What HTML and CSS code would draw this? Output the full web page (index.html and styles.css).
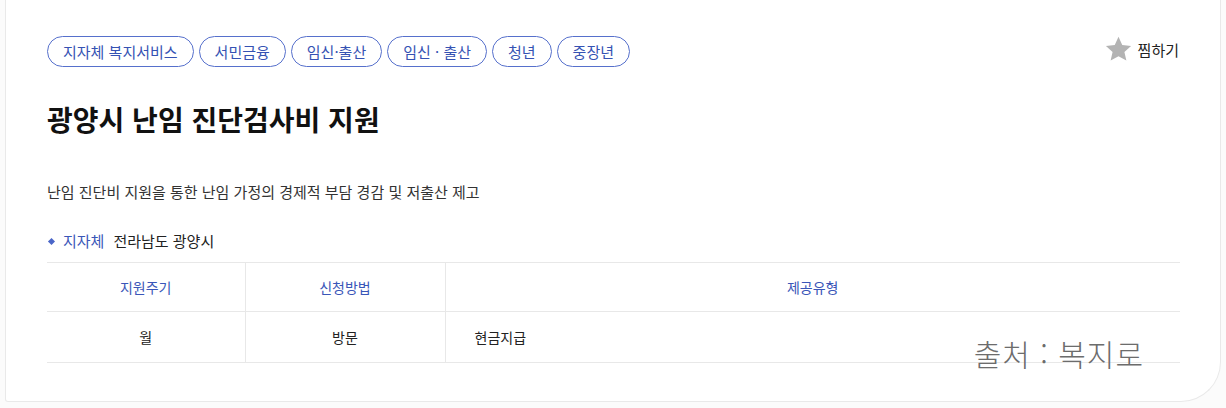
FILE: index.html
```html
<!DOCTYPE html>
<html lang="ko">
<head>
    <meta charset="UTF-8" />
    <title>광양시 난임 진단검사비 지원</title>
    <link rel="stylesheet" href="styles.css">
</head>
<body>
    <div class="card">
        <div class="top">
            <ul class="tags">
                <li>지자체 복지서비스</li>
                <li>서민금융</li>
                <li>임신·출산</li>
                <li>임신 · 출산</li>
                <li>청년</li>
                <li>중장년</li>
            </ul>
            <button class="bookmark">
                <svg width="29" height="29" viewBox="0 0 24 24">
                    <path d="M12 1.5l3.1 6.7 7.3.8-5.5 5 1.6 7.2L12 17.6l-6.5 3.6 1.6-7.2-5.5-5 7.3-.8z" fill="#b3b3b3"/>
                </svg>
                <span>찜하기</span>
            </button>
        </div>

        <h1 class="title">광양시 난임 진단검사비 지원</h1>

        <p class="desc">난임 진단비 지원을 통한 난임 가정의 경제적 부담 경감 및 저출산 제고</p>

        <div class="org">
            <span class="org-label">지자체</span>
            <span>전라남도 광양시</span>
        </div>

        <table class="info">
            <colgroup>
                <col class="c1">
                <col class="c2">
                <col>
            </colgroup>
            <tr>
                <th>지원주기</th>
                <th>신청방법</th>
                <th>제공유형</th>
            </tr>
            <tr>
                <td>월</td>
                <td>방문</td>
                <td class="left">현금지급</td>
            </tr>
        </table>

        <div class="source">출처 : 복지로</div>
    </div>
</body>
</html>
```

FILE: styles.css
```css
body {
    margin: 0;
    padding: 0 5px 5px 5px;
    background-color: #fbfbfb;
    font-family: "Noto Sans CJK KR", "Noto Sans", sans-serif;
    color: #222;
}

.card {
    position: relative;
    height: 402px;
    box-sizing: border-box;
    background-color: #fff;
    border: 1px solid #e9e9e9;
    border-top: none;
    border-radius: 0 0 40px 3px;
    padding: 36px 40px 0 41px;
}

.top {
    display: flex;
    justify-content: space-between;
    align-items: flex-start;
}

.tags {
    display: flex;
    gap: 5px;
    list-style: none;
    margin: 0;
    padding: 0;
}

.tags li {
    height: 31px;
    box-sizing: border-box;
    padding: 0 15px;
    border: 1px solid #5670cc;
    border-radius: 16px;
    color: #3552b3;
    font-size: 15px;
    line-height: 29px;
    white-space: nowrap;
}

.bookmark {
    display: flex;
    align-items: center;
    gap: 5px;
    margin: -1px 1px 0 0;
    padding: 0;
    border: none;
    background: none;
    font-family: inherit;
    font-size: 15px;
    color: #222;
    cursor: pointer;
}

.title {
    margin: 32px 0 0 0;
    font-size: 28px;
    font-weight: bold;
    line-height: 40px;
    color: #111;
}

.desc {
    margin: 43px 0 0 0;
    font-size: 15px;
    line-height: 20px;
    color: #333;
}

.org {
    display: flex;
    align-items: center;
    gap: 9px;
    margin-top: 29px;
    font-size: 15px;
    line-height: 20px;
}

.org-label {
    display: flex;
    align-items: center;
    gap: 9px;
    color: #3a56b8;
}

.org-label::before {
    content: "";
    width: 5px;
    height: 5px;
    margin-left: 2px;
    background-color: #4a66c8;
    transform: rotate(45deg);
}

.info {
    width: 100%;
    margin-top: 11px;
    border-collapse: collapse;
    font-size: 14px;
}

.info .c1 {
    width: 198px;
}

.info .c2 {
    width: 200px;
}

.info th,
.info td {
    border-top: 1px solid #e8e8e8;
    border-bottom: 1px solid #e8e8e8;
    border-left: 1px solid #e8e8e8;
    text-align: center;
}

.info th:first-child,
.info td:first-child {
    border-left: none;
}

.info th {
    height: 46px;
    font-weight: normal;
    color: #3a56b8;
}

.info td {
    height: 48px;
    color: #222;
}

.info td.left {
    text-align: left;
    padding-left: 29px;
}

.source {
    position: absolute;
    right: 76px;
    top: 333px;
    font-size: 30px;
    font-weight: 300;
    line-height: 40px;
    color: #6c6c6c;
    letter-spacing: 1px;
}
```
